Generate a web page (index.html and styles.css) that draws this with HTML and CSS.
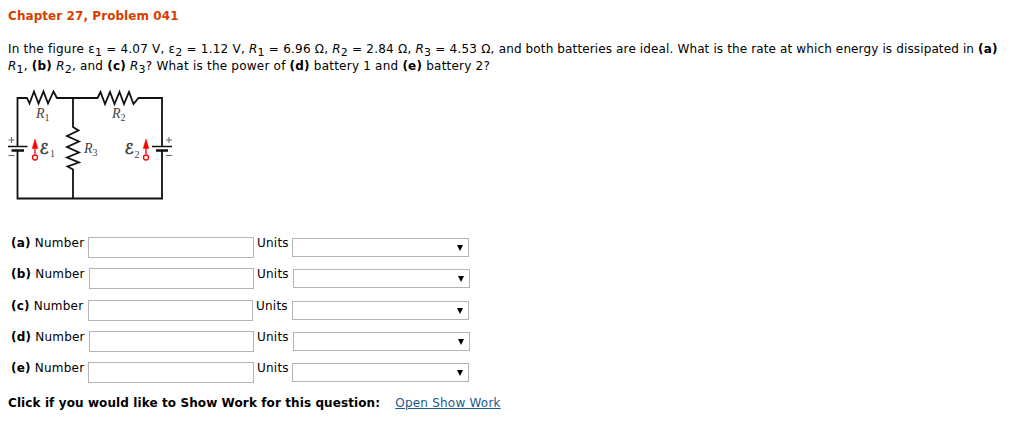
FILE: index.html
```html
<!DOCTYPE html>
<html lang="en">

<head>
    <meta charset="UTF-8">
    <meta name="viewport" content="width=device-width, initial-scale=1.0">
    <title>Chapter 27, Problem 041</title>
    <link rel="stylesheet" href="styles.css">
</head>

<body>
    <h1>Chapter 27, Problem 041</h1>

    <div class="question">
        <p>In the figure ε<sub>1</sub> = 4.07 V, ε<sub>2</sub> = 1.12 V, <i>R</i><sub>1</sub> = 6.96 Ω, <i>R</i><sub>2</sub> = 2.84 Ω, <i>R</i><sub>3</sub> = 4.53 Ω, <span class="ask">and both batteries are ideal. What is the rate at which energy is dissipated in <b>(a)</b></span></p>
        <p><i>R</i><sub>1</sub>, <b>(b)</b> <i>R</i><sub>2</sub>, and <b>(c)</b> <i>R</i><sub>3</sub>? What is the power of <b>(d)</b> battery 1 and <b>(e)</b> battery 2?</p>
    </div>

    <svg class="circuit" width="172" height="120" viewBox="8 84 172 120">
        <!-- wires and resistors -->
        <g class="wire">
            <path d="M17.5 146V98H27l2.500 5.500L34 91.500l4.500 12L43.500 91.500l4.500 12L53.500 91.500 57 98H97.500l3 -6 4.500 12 5 -12 4.500 12 5 -12 4.500 12 5 -12 4.500 12L138.500 98H162V146" />
            <path d="M17.500 151V198.500H162V151" />
            <path d="M73 98v29l5.500 3.500L67 136l12 5.500L67 147l12 5.500L67 157.500l12 5L67.500 166.500 73 169.500V198" />
        </g>
        <!-- batteries -->
        <path class="plate" d="M8 146.500H27.500M152 146.500H172" />
        <path class="plate thick" d="M11.500 150.500H24M156 150.500H168" />
        <path class="sign" d="M8.500 140h6M11.500 137v6M8.500 155.500h6M166 140h6M169 137v6M166 155.500h6" />
        <!-- emf arrows -->
        <g class="arrow">
            <path d="M35 154V147M146 154V147" />
            <path class="head" d="M35 139l2.800 9.500h-5.600zM146 139l2.800 9.500h-5.600z" />
            <circle cx="35" cy="157.500" r="2.500" />
            <circle cx="146" cy="157.500" r="2.500" />
        </g>
        <g class="name">
            <text x="36" y="118"><tspan class="var">R</tspan><tspan class="index" dy="3">1</tspan></text>
            <text x="112" y="118"><tspan class="var">R</tspan><tspan class="index" dy="3">2</tspan></text>
            <text x="84" y="153"><tspan class="var">R</tspan><tspan class="index" dy="3">3</tspan></text>
            <text class="emf" x="39.500" y="154">ℰ</text>
            <text class="index" x="50" y="157">1</text>
            <text class="emf" x="124.500" y="154">ℰ</text>
            <text class="index" x="134.500" y="158">2</text>
        </g>
    </svg>

    <form class="answers">
        <div class="row">
            <label for="num-a"><b>(a)</b> Number</label>
            <input type="text" id="num-a">
            <span class="units">Units</span>
            <span class="select"><select aria-label="Units a"><option></option></select></span>
        </div>
        <div class="row shifted">
            <label for="num-b"><b>(b)</b> Number</label>
            <input type="text" id="num-b">
            <span class="units">Units</span>
            <span class="select"><select aria-label="Units b"><option></option></select></span>
        </div>
        <div class="row narrow">
            <label for="num-c"><b>(c)</b> Number</label>
            <input type="text" id="num-c">
            <span class="units">Units</span>
            <span class="select"><select aria-label="Units c"><option></option></select></span>
        </div>
        <div class="row shifted">
            <label for="num-d"><b>(d)</b> Number</label>
            <input type="text" id="num-d">
            <span class="units">Units</span>
            <span class="select"><select aria-label="Units d"><option></option></select></span>
        </div>
        <div class="row">
            <label for="num-e"><b>(e)</b> Number</label>
            <input type="text" id="num-e">
            <span class="units">Units</span>
            <span class="select"><select aria-label="Units e"><option></option></select></span>
        </div>
    </form>

    <div class="show-work">
        <b>Click if you would like to Show Work for this question:</b>
        <a href="#">Open Show Work</a>
    </div>
</body>

</html>
```
FILE: styles.css
```css
* {
    box-sizing: border-box;
}

body {
    margin: 0;
    padding: 8px 8px 0;
    background: #fff;
    color: #000;
    font-family: Verdana, "DejaVu Sans", sans-serif;
    font-size: 12px;
    line-height: 17px;
    letter-spacing: 0.22px;
}

h1 {
    margin: 0 0 16px;
    color: #d43f00;
    font-size: 12px;
    line-height: 17px;
    letter-spacing: 0.07px;
}

.question p {
    margin: 0;
    height: 17px;
    white-space: nowrap;
}

.ask {
    letter-spacing: 0.13px;
}

sub {
    font-size: 11px;
    line-height: 0;
    vertical-align: -3px;
}

/* Circuit diagram */
.circuit {
    display: block;
    margin-top: 9px;
    letter-spacing: 0;
}

.wire {
    fill: none;
    stroke: #111;
    stroke-width: 1.8;
}

.plate {
    stroke: #111;
    stroke-width: 1.5;
}

.thick {
    stroke-width: 2.5;
}

.sign {
    fill: none;
    stroke: #666;
    stroke-width: 1;
}

.arrow {
    fill: none;
    stroke: #f00;
    stroke-width: 1.3;
}

.arrow .head {
    fill: #f00;
    stroke-width: 0.5;
}

.name {
    fill: #444;
    font-family: "Liberation Serif", serif;
    font-size: 14px;
}

.var {
    font-style: italic;
}

.name .index {
    font-size: 10px;
}

.name .emf {
    font-family: "DejaVu Sans", sans-serif;
    font-size: 15px;
    stroke: #444;
    stroke-width: 0.7;
}

/* Answer rows */
.answers {
    margin: 31px 0 0 3px;
}

.row {
    display: grid;
    grid-template-columns: 77px 166px 38px 177px;
    align-items: start;
    height: 31.25px;
}

.row.shifted {
    grid-template-columns: 78px 165px 39px 177px;
}

.row.narrow {
    grid-template-columns: 77px 165px 39px 177px;
}

.row input {
    width: 100%;
    height: 21px;
    margin: 2px 0 0;
    border: 1px solid #b4b4b4;
}

.units {
    padding-left: 3px;
}

.select {
    position: relative;
    height: 19px;
    margin-top: 3px;
}

.select select {
    display: block;
    width: 100%;
    height: 19px;
    appearance: none;
    background: #fff;
    border: 1px solid #b4b4b4;
    border-radius: 0;
}

.select::after {
    content: "";
    position: absolute;
    right: 6px;
    top: 7px;
    border: 3px solid transparent;
    border-top: 6px solid #000;
    border-bottom: 0;
}

.show-work {
    margin-top: 4px;
}

.show-work b {
    letter-spacing: 0.1px;
}

.show-work a {
    margin-left: 11px;
    color: #1a5a8e;
}
```
